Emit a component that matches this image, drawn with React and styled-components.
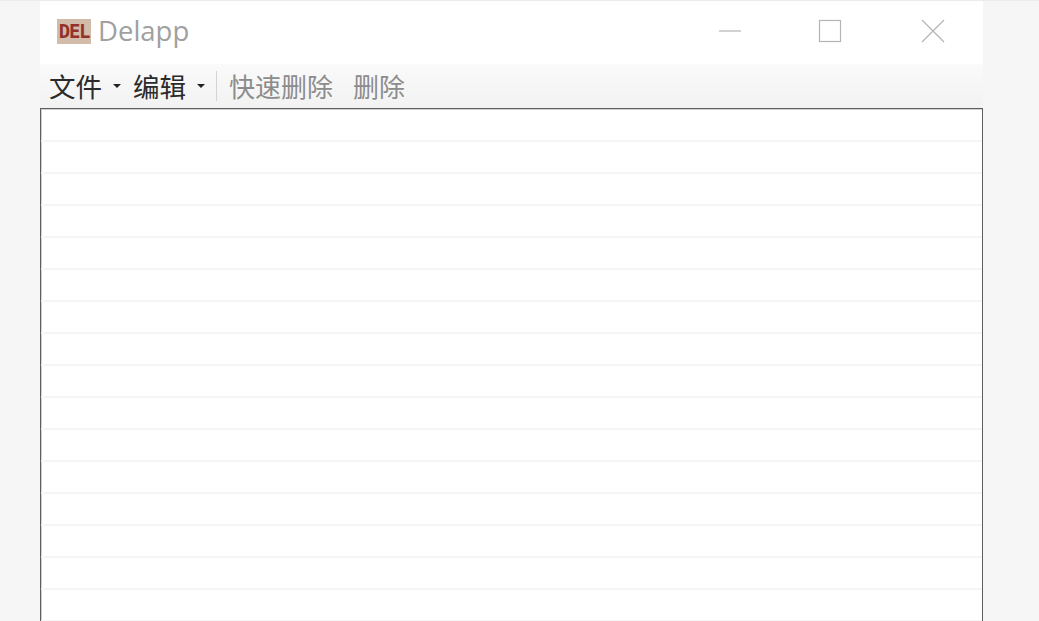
import React from 'react';
import styled, { createGlobalStyle } from 'styled-components';

const GlobalStyle = createGlobalStyle`
  html, body, #root {
    height: 100%;
  }
  body {
    margin: 0;
    background: #f6f6f6;
    overflow: hidden;
    font-family: "Noto Sans CJK SC", "Noto Sans", sans-serif;
  }
`;

const Page = styled.div`
  height: 100%;
  box-sizing: border-box;
  padding: 0 56px 0 40px;
  border-top: 1px solid #ebebeb;
  overflow: hidden;
`;

const Window = styled.div`
  display: flex;
  flex-direction: column;
  height: 100%;
`;

const TitleBar = styled.div`
  display: flex;
  align-items: center;
  height: 63px;
  flex: none;
  box-sizing: border-box;
  padding: 0 0 3px 17px;
  background: #fff;
`;

const Logo = styled.div`
  display: flex;
  align-items: center;
  justify-content: center;
  width: 34px;
  height: 25px;
  background: #d3bbaa;
  color: #93322a;
  font-family: "DejaVu Sans Mono", monospace;
  font-size: 19px;
  font-weight: 700;
  letter-spacing: -1.3px;
`;

const Title = styled.div`
  margin-left: 7px;
  color: #a0a0a0;
  font-family: "Open Sans", sans-serif;
  font-size: 27.5px;
  line-height: 36px;
`;

const Controls = styled.div`
  display: flex;
  margin-left: auto;
  margin-right: 38px;
  gap: 76px;
`;

const ControlIcon = styled.svg`
  display: block;
  width: 24px;
  height: 24px;
  margin-left: ${p => p.$shift || 0}px;
  fill: none;
  stroke: #b4b4b4;
  stroke-width: 1.2;
`;

const Toolbar = styled.div`
  display: flex;
  align-items: center;
  height: 44px;
  flex: none;
  padding-left: 9px;
  box-sizing: border-box;
  background: linear-gradient(#fafafa, #f2f2f2);
`;

const Menu = styled.div`
  display: flex;
  align-items: center;
  margin-right: ${p => p.$gap}px;
  color: #2b2b2b;
  font-size: 26.5px;
  line-height: 44px;
`;

const Caret = styled.span`
  width: 0;
  height: 0;
  margin-left: 11px;
  border-left: 4px solid transparent;
  border-right: 4px solid transparent;
  border-top: 4px solid #222;
`;

const Separator = styled.div`
  width: 1px;
  height: 30px;
  margin: 0 12px 0 11px;
  background: #d4d4d4;
`;

const Action = styled.div`
  margin-right: 20px;
  color: #8c8c8c;
  font-size: 26px;
  line-height: 44px;
`;

const List = styled.div`
  flex: 1;
  min-height: 0;
  box-sizing: border-box;
  padding-top: 1px;
  background: #fff;
  border: 1px solid #5e5e5e;
  border-bottom: 0;
  box-shadow: inset 1px 1px 0 #d0d0d0;
  overflow: hidden;
`;

const Row = styled.div`
  height: 30px;
  border-bottom: 2px solid #f5f5f5;
`;

const rows = Array.from({ length: 16 }, (_, i) => i);

export default function App() {
  return (
    <>
      <GlobalStyle />
      <Page>
        <Window>
          <TitleBar>
            <Logo>DEL</Logo>
            <Title>Delapp</Title>
            <Controls>
              <ControlIcon viewBox="0 0 24 24">
                <path d="M1 12h22" />
              </ControlIcon>
              <ControlIcon viewBox="0 0 24 24">
                <rect x="1.5" y="1.5" width="21" height="21" />
              </ControlIcon>
              <ControlIcon viewBox="0 0 24 24" $shift={3}>
                <path d="M1 1l22 22M23 1L1 23" />
              </ControlIcon>
            </Controls>
          </TitleBar>
          <Toolbar>
            <Menu $gap={12}>文件<Caret /></Menu>
            <Menu $gap={0}>编辑<Caret /></Menu>
            <Separator />
            <Action>快速删除</Action>
            <Action>删除</Action>
          </Toolbar>
          <List>
            {rows.map(i => <Row key={i} />)}
          </List>
        </Window>
      </Page>
    </>
  );
}
